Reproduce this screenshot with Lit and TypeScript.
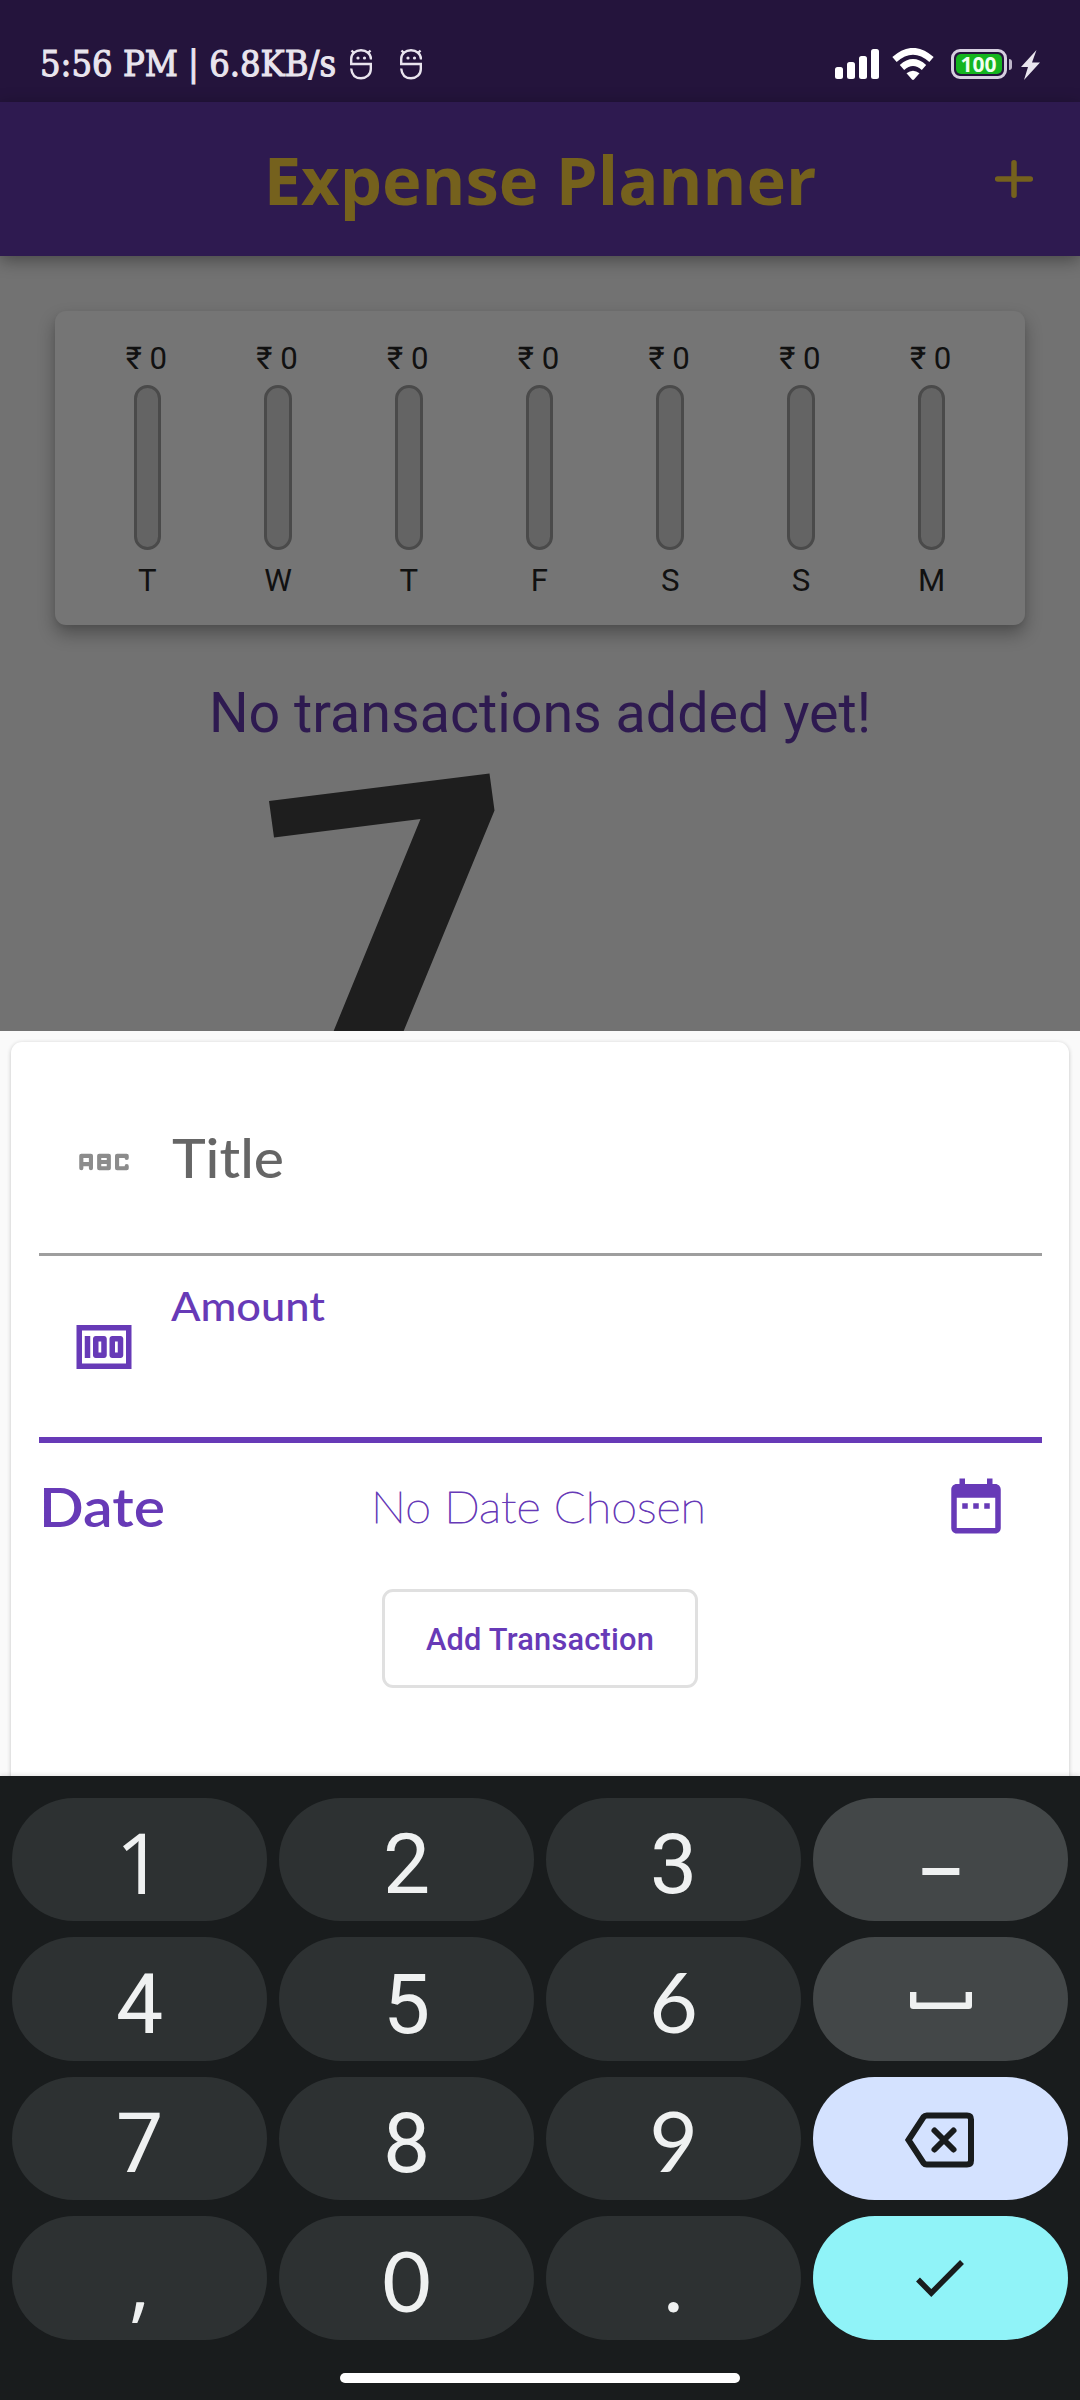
import { LitElement, html, css, svg } from "lit";
import { customElement, property } from "lit/decorators.js";

/** One line of text set to an exact width. */
@customElement("fit-text")
class FitText extends LitElement {
  @property() text = "";
  @property({ type: Number }) width = 100;
  @property({ type: Number }) height = 60;
  @property({ type: Number }) baseline = 45;
  /** Extra outline width, for weights between those of the family. */
  @property({ type: Number }) bolden = 0;

  static styles = css`
    :host { display: block; flex: none; }
    .line { display: block; overflow: visible; fill: currentColor; stroke: currentColor; }
  `;

  render() {
    return html`<svg class="line" width=${this.width} height=${this.height} stroke-width=${this.bolden}>
      ${svg`<text x="0" y=${this.baseline} textLength=${this.width} lengthAdjust="spacingAndGlyphs">${this.text}</text>`}
    </svg>`;
  }
}

@customElement("status-bar")
class StatusBar extends LitElement {
  static styles = css`
    :host { display: block; }
    .bar {
      height: 102px; box-sizing: border-box; padding: 48px 40px 0 40px;
      display: flex; align-items: flex-start; background: #24143c; color: #e9e5ee;
    }
    .clock { font: 400 34.5px "DejaVu Serif", serif; }
    .face { display: block; margin-left: 14px; }
    .face + .face { margin-left: 28px; }
    .spacer { flex: 1; }
    .icon { display: block; }
    .wifi { margin-left: 13px; }
    .battery {
      margin: 1px 0 0 17px; width: 56px; height: 30px; box-sizing: border-box;
      border: 3px solid #d6cfe0; border-radius: 9px; padding: 2px; display: flex;
    }
    .level {
      flex: 1; border-radius: 5px; background: #14b41f; color: #effff0;
      font: 700 21px/21px "Open Sans", sans-serif; text-align: center;
    }
    .nub { margin: 11px 0 0 2.5px; width: 3px; height: 11px; border-radius: 0 3px 3px 0; background: #bdb5c9; }
    .bolt { margin: 2px 0 0 9px; }
  `;

  private face() {
    return html`<svg class="face" width="22" height="32" viewBox="0 0 22 32" fill="none" stroke="#e9e5ee" stroke-width="2.400">
      <path d="M21 11.500V11C21 6 16.500 2.200 11 2.200S1.200 6 1.200 11v5h19.600v5c0 5.500-4.300 9.300-9.800 9.300S1.800 27 1.200 20.500"/>
      <path d="M4.500 5.500 1.500 2.500M17.500 5.500l3-3"/>
      <circle cx="8" cy="10" r="1.600" fill="#e9e5ee" stroke="none"/>
      <circle cx="14.500" cy="10" r="1.600" fill="#e9e5ee" stroke="none"/>
    </svg>`;
  }

  render() {
    return html`<div class="bar">
      <fit-text class="clock" text="5:56 PM | 6.8KB/s" width="296" height="40" baseline="28" bolden="1.1"></fit-text>
      ${this.face()}${this.face()}
      <div class="spacer"></div>
      <svg class="icon" width="44" height="32" viewBox="0 0 44 32" fill="#fff">
        <rect x="0" y="19" width="8" height="12" rx="2.500"/>
        <rect x="12" y="14" width="8" height="17" rx="2.500"/>
        <rect x="24" y="8" width="8" height="23" rx="2.500"/>
        <rect x="36" y="1" width="8" height="30" rx="2.500"/>
      </svg>
      <svg class="icon wifi" width="42" height="32" viewBox="0 0 42 32" fill="none" stroke="#fff" stroke-width="6.500">
        <path d="M2.500 11.500Q21-5 39.500 11.500"/>
        <path d="M10 19.500Q21 9.500 32 19.500"/>
        <path d="M14.500 25.300Q21 20 27.500 25.300L22 31.500q-1 .9-2 0Z" fill="#fff" stroke="none"/>
      </svg>
      <div class="battery"><div class="level">100</div></div>
      <div class="nub"></div>
      <svg class="icon bolt" width="19" height="30" viewBox="0 0 19 30" fill="#e9e5ee">
        <path d="M15.500 0 0 17h7L3 30 19 12.500h-8Z"/>
      </svg>
    </div>`;
  }
}

@customElement("expense-chart")
class ExpenseChart extends LitElement {
  private days = ["T", "W", "T", "F", "S", "S", "M"];

  static styles = css`
    :host { display: block; }
    .card {
      height: 314px; box-sizing: border-box; padding: 27px 28px 0 27px; border-radius: 11px;
      background: #757575; display: grid; grid-template-columns: repeat(7, 1fr);
      box-shadow: 0 9px 17px rgba(0, 0, 0, 0.3), 0 2px 5px rgba(0, 0, 0, 0.06);
    }
    .day {
      display: flex; flex-direction: column; align-items: center;
      font: 400 31.200px/42px Roboto, sans-serif; color: #111;
    }
    .amount { white-space: pre; margin-left: -2px; }
    .track {
      margin: 5px 0 10px; width: 27.500px; height: 165px; box-sizing: border-box;
      border: 3px solid #4a4a4a; border-radius: 14px; background: #646464;
    }
  `;

  render() {
    return html`<div class="card">
      ${this.days.map((d) => html`<div class="day">
        <div class="amount">₹ 0</div>
        <div class="track"></div>
        <div>${d}</div>
      </div>`)}
    </div>`;
  }
}

@customElement("transaction-form")
class TransactionForm extends LitElement {
  static styles = css`
    :host { display: block; height: 745px; overflow: hidden; background: #fafafa; }
    .card {
      margin: 11px 11px 0; height: 760px; box-sizing: border-box; padding: 27px 27.500px;
      border-radius: 11px; background: #fff; box-shadow: 0 1px 4px rgba(0, 0, 0, 0.22);
      font-family: Lato, sans-serif; color: #673ab7;
    }
    .field { display: flex; box-sizing: border-box; padding-left: 32px; }
    .icon { display: block; flex: none; width: 66px; height: 66px; }
    .title { height: 187px; padding-top: 60px; border-bottom: 3px solid #9e9e9e; color: #8c8c8c; }
    .title .label { margin-left: 35px; color: #666; font-size: 54px; font-weight: 500; }
    .amount { height: 187px; padding-top: 30px; border-bottom: 6px solid #673ab7; }
    .amount .icon { margin-top: 28px; }
    .amount .label { margin-left: 34px; font-size: 41px; font-weight: 500; }
    .date { height: 146px; display: flex; align-items: flex-start; padding: 30px 33px 0 0; box-sizing: border-box; }
    .name { font-size: 54px; font-weight: 600; }
    .chosen { margin: 0 auto 0 206px; font-size: 43px; font-weight: 200; }
    .submit {
      display: flex; align-items: center; justify-content: center; margin: 0 auto;
      width: 316px; height: 99px; box-sizing: border-box; border: 3px solid #e0e0e0;
      border-radius: 11px; background: #fff; color: #673ab7; padding: 2px 0 0;
      font: 500 30.800px Roboto, sans-serif; letter-spacing: 0.2px;
    }
  `;

  render() {
    return html`<div class="card">
      <div class="field title">
        <svg class="icon" viewBox="0 0 24 24" fill="none" stroke="currentColor" stroke-width="1.500" stroke-linecap="round" stroke-linejoin="round">
          <path d="M3.750 14.250v-4.500h3.500v4.500M3.750 12.750h3.500M10.250 9.750h3.500v4.500h-3.500zM10.250 12h3.500M20.250 10.500v-.75h-3.500v4.500h3.500v-.75"/>
        </svg>
        <fit-text class="label" text="Title" width="112" height="66" baseline="49"></fit-text>
      </div>
      <div class="field amount">
        <svg class="icon" viewBox="0 0 24 24" fill="currentColor">
          <path d="M5 8h2v8H5zM12 8H9c-.55 0-1 .45-1 1v6c0 .55.45 1 1 1h3c.55 0 1-.45 1-1V9c0-.55-.45-1-1-1zm-1 6h-1v-4h1zM18 8h-3c-.55 0-1 .45-1 1v6c0 .55.45 1 1 1h3c.55 0 1-.45 1-1V9c0-.55-.45-1-1-1zm-1 6h-1v-4h1zM2 4v16h20V4zm2 14V6h16v12z"/>
        </svg>
        <fit-text class="label" text="Amount" width="154" height="50" baseline="35"></fit-text>
      </div>
      <div class="date">
        <fit-text class="name" text="Date" width="126" height="66" baseline="54"></fit-text>
        <fit-text class="chosen" text="No Date Chosen" width="335" height="66" baseline="50" bolden="0.9"></fit-text>
        <svg class="icon" viewBox="0 0 24 24" fill="currentColor">
          <path d="M9 11H7v2h2v-2zm4 0h-2v2h2v-2zm4 0h-2v2h2v-2zm2-7h-1V2h-2v2H8V2H6v2H5c-1.110 0-1.990.9-1.990 2L3 20c0 1.100.89 2 2 2h14c1.100 0 2-.9 2-2V6c0-1.100-.9-2-2-2zm0 16H5V9h14v11z"/>
        </svg>
      </div>
      <button class="submit">Add Transaction</button>
    </div>`;
  }
}

@customElement("number-pad")
class NumberPad extends LitElement {
  static styles = css`
    :host {
      display: flex; flex-direction: column; align-items: center; height: 624px;
      background: #191c1d; box-shadow: 0 -1px 5px rgba(0, 0, 0, 0.12); position: relative;
    }
    .keys {
      width: 1080px; box-sizing: border-box; padding: 22px 12px 0; display: grid;
      grid-template-columns: repeat(4, 255px); grid-auto-rows: 123.400px; gap: 16px 12px;
    }
    .key {
      display: flex; align-items: center; justify-content: center; border-radius: 62px;
      background: #2d3132; color: #eff1f1; font: 400 84px/112px Roboto, sans-serif;
      padding-top: 11px; box-sizing: border-box;
    }
    .round { font-family: Lato, sans-serif; padding-top: 4px; }
    .plain { font-family: "Open Sans", sans-serif; padding-top: 4px; }
    .side { background: #434748; padding-top: 0; }
    .dash { font-size: 74px; font-weight: 500; line-height: 90px; padding-top: 26px; }
    .erase { background: #d4e2ff; color: #191c1d; padding: 0 2px 0 0; }
    .done { background: #90f3f8; color: #191c1d; padding: 0 2px 0 0; }
    .handle { margin-top: 33px; width: 400px; height: 10px; border-radius: 5px; background: #fff; }
    .icon { display: block; }
  `;

  private digit(d: string) {
    const face = "690.".includes(d) ? "round" : "1,".includes(d) ? "plain" : "";
    return html`<div class="key ${face}">${d}</div>`;
  }

  render() {
    return html`
      <div class="keys">
        ${["1", "2", "3"].map((d) => this.digit(d))}
        <div class="key side dash">–</div>
        ${["4", "5", "6"].map((d) => this.digit(d))}
        <div class="key side">
          <svg class="icon" width="62" height="22" viewBox="0 0 62 22" fill="none" stroke="currentColor" stroke-width="6.400" stroke-linejoin="round">
            <path d="M3.200 4v13.800h55.600V4"/>
          </svg>
        </div>
        ${["7", "8", "9"].map((d) => this.digit(d))}
        <div class="key erase">
          <svg class="icon" width="72" height="60" viewBox="0 0 72 60" fill="none" stroke="currentColor" stroke-width="6" stroke-linejoin="round" stroke-linecap="round">
            <path d="M4.500 32 19.500 9q1.300-1.500 3.200-1.500H63q4 0 4 4v41q0 4-4 4H22.700q-1.900 0-3.200-1.500Z" stroke-linejoin="miter"/>
            <path d="M30.500 22.500l19 19M49.500 22.500l-19 19"/>
          </svg>
        </div>
        ${[",", "0", "."].map((d) => this.digit(d))}
        <div class="key done">
          <svg class="icon" width="48" height="38" viewBox="0 0 48 38" fill="none" stroke="currentColor" stroke-width="5.500">
            <path d="M2 20.500 15.300 34 46 3"/>
          </svg>
        </div>
      </div>
      <div class="handle"></div>`;
  }
}

@customElement("app-root")
class AppRoot extends LitElement {
  static styles = css`
    :host { display: block; width: 1080px; height: 2400px; overflow: hidden; background: #727272; }
    .screen { display: flex; flex-direction: column; height: 2400px; }
    .appbar {
      flex: none; height: 154px; box-sizing: border-box; padding: 0 46px; display: grid;
      grid-template-columns: 40px 1fr 40px; align-items: center; background: #2e1a50; color: #75611d;
      box-shadow: 0 4px 16px rgba(0, 0, 0, 0.38); position: relative;
    }
    .heading {
      grid-column: 2; text-align: center; font: 700 66.900px/90px "Open Sans", sans-serif;
      white-space: nowrap;
    }
    .body { height: 775px; flex: none; overflow: hidden; box-sizing: border-box; padding: 55px 55px 0; }
    .empty {
      margin-top: 56px; text-align: center; font: 400 55.600px/64px Roboto, sans-serif;
      color: #2e1a50; white-space: nowrap;
    }
    .picture { display: block; margin: 28px 0 0 213px; }
  `;

  render() {
    return html`<div class="screen">
      <status-bar></status-bar>
      <div class="appbar">
        <div class="heading">Expense Planner</div>
        <svg width="40" height="40" viewBox="0 0 40 40" fill="none" stroke="currentColor" stroke-width="5.500" stroke-linecap="round">
          <path d="M20 3.700v32.600M3.700 20h32.600"/>
        </svg>
      </div>
      <div class="body">
        <expense-chart></expense-chart>
        <div class="empty">No transactions added yet!</div>
        <svg class="picture" width="230" height="262" viewBox="0 0 230 262">
          <polygon points="1,28 221.500,0.500 226.500,37.500 134,262 64,262 152.500,46 6,64.500" fill="#1e1e1e"/>
        </svg>
      </div>
      <transaction-form></transaction-form>
      <number-pad></number-pad>
    </div>`;
  }
}
